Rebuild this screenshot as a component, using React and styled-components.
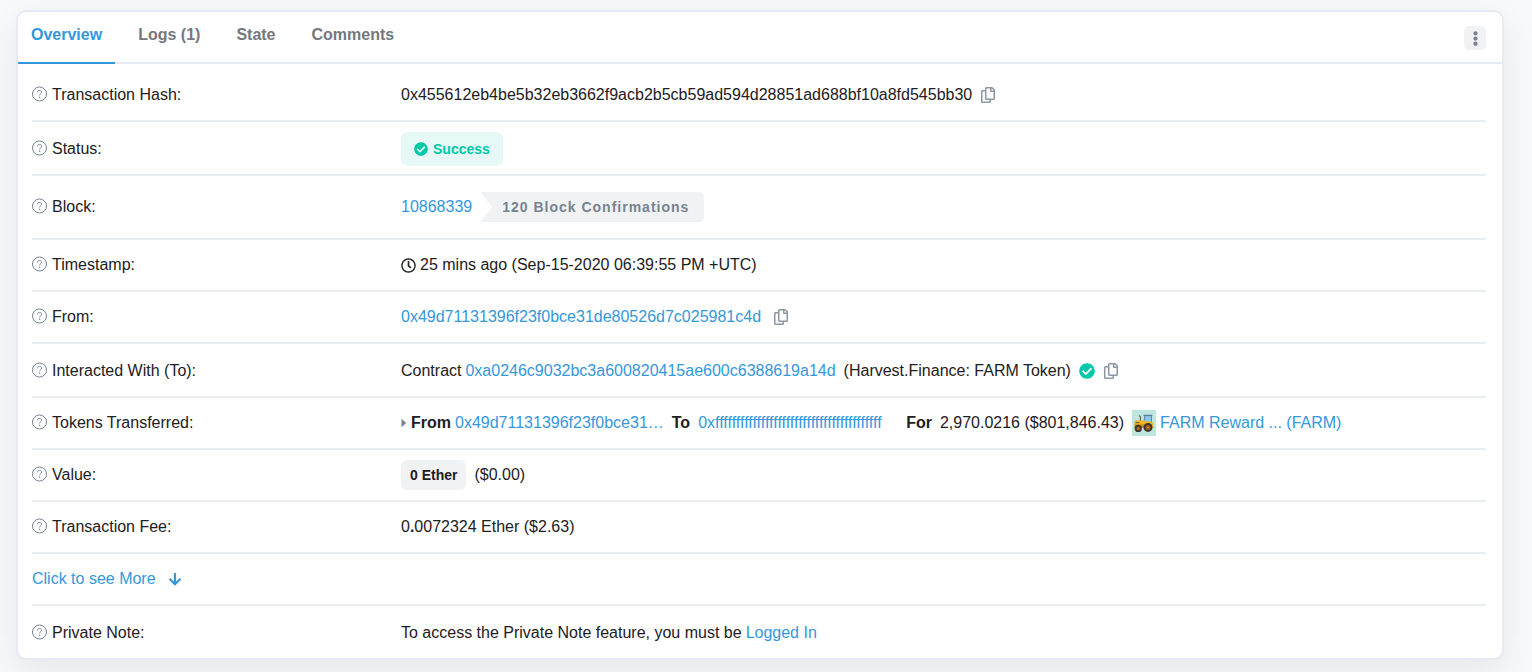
import React from "react";
import styled, { createGlobalStyle } from "styled-components";
import {
  FaCheckCircle,
  FaEllipsisV,
  FaRegClock,
  FaRegCopy,
} from "react-icons/fa";

const GlobalStyle = createGlobalStyle`
  *, *::before, *::after { box-sizing: border-box; }
  body {
    margin: 0;
    background: #f8f9fa;
    color: #1e2022;
    font-family: "Liberation Sans", Arial, sans-serif;
    font-size: 16px;
    line-height: 24px;
  }
`;

const Page = styled.main`
  padding: 10px 28px 12px 16px;
`;

const Card = styled.section`
  background: #fff;
  border: 2px solid #e7eaf3;
  border-radius: 10px;
  box-shadow: 0 12px 32px rgba(160, 166, 180, 0.2);
`;

const CardHeader = styled.header`
  display: flex;
  justify-content: space-between;
  align-items: flex-start;
  height: 52px;
  padding-right: 16px;
  border-bottom: 2px solid #e7eaf3;
`;

const Tabs = styled.nav`
  display: flex;
  gap: 10px;
`;

const Tab = styled.button`
  height: 52px;
  padding: 0 13px 4px;
  border: 0;
  border-bottom: 2px solid ${(p) => (p.$active ? "#3498db" : "transparent")};
  background: none;
  color: ${(p) => (p.$active ? "#3498db" : "#74787d")};
  font: bold 16px/24px "Liberation Sans", Arial, sans-serif;
  cursor: pointer;
`;

const MenuButton = styled.button`
  display: flex;
  align-items: center;
  justify-content: center;
  width: 22px;
  height: 24px;
  margin-top: 14px;
  padding: 0;
  border: 0;
  border-radius: 5px;
  background: #f1f2f4;
  color: #77838f;
  cursor: pointer;
`;

const Details = styled.dl`
  margin: 0;
  padding: 4px 16px 0 14px;
`;

const Row = styled.div`
  display: grid;
  grid-template-columns: 369px minmax(0, 1fr);
  align-items: center;
  min-height: ${(p) => p.$height || 52}px;
  padding-top: ${(p) => (p.$height === 54 ? 2 : 0)}px;
  border-bottom: 2px solid #e9eef3;

  &:last-child {
    min-height: 52px;
    border-bottom: 0;
  }

  @media (max-width: 900px) {
    grid-template-columns: 1fr;
    padding: 8px 0;
  }
`;

const Term = styled.dt`
  display: flex;
  align-items: center;
  gap: 4px;

  svg {
    margin-bottom: 2px;
  }
`;

const Value = styled.dd`
  display: flex;
  flex-wrap: wrap;
  align-items: center;
  gap: ${(p) => p.$gap || 8}px;
  min-width: 0;
  margin: 0;
  overflow-wrap: anywhere;
`;

const Group = styled.span`
  display: inline-flex;
  flex-wrap: wrap;
  align-items: center;
  gap: 4px;
`;

const Link = styled.a`
  color: #3498db;
  text-decoration: none;
`;

const RecipientLink = styled(Link)`
  min-width: 200px;
`;

const MoreLink = styled(Link)`
  display: inline-flex;
  align-items: center;
  gap: 12px;
`;

const CopyButton = styled.button`
  display: inline-flex;
  padding: 0;
  border: 0;
  background: none;
  color: #8c98a4;
  cursor: pointer;
`;

const Badge = styled.span`
  display: inline-flex;
  align-items: center;
  gap: 5px;
  height: ${(p) => (p.$success ? 34 : 30)}px;
  padding: 0 ${(p) => (p.$success ? 13 : 9)}px;
  border-radius: 6px;
  background: ${(p) => (p.$success ? "#e6f9f6" : "#f1f2f4")};
  color: ${(p) => (p.$success ? "#00c9a7" : "#1e2022")};
  font-size: 14px;
  font-weight: bold;
`;

const Confirmations = styled.span`
  height: 30px;
  padding: 0 15px 0 22px;
  border-radius: 0 5px 5px 0;
  background: #f1f2f4;
  clip-path: polygon(0 0, 100% 0, 100% 100%, 0 100%, 12px 50%);
  color: #77838f;
  font-size: 14px;
  font-weight: bold;
  line-height: 30px;
  letter-spacing: 1px;
`;

const Verified = styled(FaCheckCircle)`
  color: #00c9a7;
`;

function HelpIcon() {
  return (
    <svg width="16" height="16" viewBox="0 0 16 16" fill="none" stroke="#77838f" aria-hidden="true">
      <circle cx="7.5" cy="8" r="7" />
      <path d="M5.4 6.4C5.5 5.1 6.3 4.4 7.5 4.4c1.2 0 2.1.7 2.1 1.8 0 1.6-2 1.6-2 3.2" />
      <circle cx="7.6" cy="11.3" r=".7" fill="#77838f" stroke="none" />
    </svg>
  );
}

function Caret() {
  return (
    <svg width="6" height="10" viewBox="0 0 6 10" fill="#77838f" aria-hidden="true">
      <path d="M.5.8v8.4L5.2 5z" />
    </svg>
  );
}

function ArrowDown() {
  return (
    <svg width="14" height="14" viewBox="0 0 14 14" fill="none" stroke="currentColor" strokeWidth="2.2" aria-hidden="true">
      <path d="M7 1v11M1.5 6.8 7 12.2l5.5-5.4" />
    </svg>
  );
}

function TractorLogo() {
  return (
    <svg width="24" height="26" viewBox="0 0 24 26" aria-hidden="true">
      <path fill="#bfe5df" d="M0 0h24v26H0z" />
      <path fill="#8cc9e8" d="M12.5 6h7v6h-8z" />
      <path fill="none" stroke="#5b7f95" strokeWidth=".9" d="M11.9 12.5 12.8 6M19.5 6v6" />
      <path fill="#527d9b" d="M11.5 4.8h8.8v1.3h-8.8z" />
      <path fill="none" stroke="#68645a" strokeWidth="1.1" d="M8.4 11V6.8L7 5.4" />
      <path fill="#f3b51d" d="M2.6 12q0-1.6 1.6-1.6H12l1.3 1.1h6.4q1.8 1 1.8 4.5v2H2.6z" />
      <path fill="#d18a13" d="M2.6 14.4H12V18H2.6z" />
      <path fill="#5c5a50" d="M3.4 12.2h4v1h-4z" />
      <circle cx="6.3" cy="18.4" r="3.6" fill="#3d3630" />
      <circle cx="6.3" cy="18.4" r="1.7" fill="#b96b24" />
      <circle cx="16" cy="17.4" r="4.5" fill="#3d3630" />
      <circle cx="16" cy="17.4" r="2.5" fill="#9c5720" />
      <circle cx="16" cy="17.4" r="1" fill="#d98c30" />
    </svg>
  );
}

function Copy({ label }) {
  return (
    <CopyButton type="button" aria-label={label}>
      <FaRegCopy size={16} />
    </CopyButton>
  );
}

function Detail({ label, height, gap, children }) {
  return (
    <Row $height={height}>
      <Term>
        <HelpIcon />
        {label}:
      </Term>
      <Value $gap={gap}>{children}</Value>
    </Row>
  );
}

export default function App() {
  return (
    <>
      <GlobalStyle />
      <Page>
        <Card>
          <CardHeader>
            <Tabs aria-label="Transaction sections">
              <Tab type="button" $active aria-current="page">Overview</Tab>
              <Tab type="button">Logs (1)</Tab>
              <Tab type="button">State</Tab>
              <Tab type="button">Comments</Tab>
            </Tabs>
            <MenuButton type="button" aria-label="More options">
              <FaEllipsisV size={15} />
            </MenuButton>
          </CardHeader>
          <Details>
            <Detail label="Transaction Hash" height={54}>
              0x455612eb4be5b32eb3662f9acb2b5cb59ad594d28851ad688bf10a8fd545bb30
              <Copy label="Copy transaction hash" />
            </Detail>
            <Detail label="Status" height={54}>
              <Badge $success>
                <FaCheckCircle size={14} />
                Success
              </Badge>
            </Detail>
            <Detail label="Block" height={64}>
              <Link href="#block">10868339</Link>
              <Confirmations>120 Block Confirmations</Confirmations>
            </Detail>
            <Detail label="Timestamp" gap={4}>
              <FaRegClock size={15} />
              25 mins ago (Sep-15-2020 06:39:55 PM +UTC)
            </Detail>
            <Detail label="From" gap={12}>
              <Link href="#sender">0x49d71131396f23f0bce31de80526d7c025981c4d</Link>
              <Copy label="Copy sender address" />
            </Detail>
            <Detail label="Interacted With (To)" height={54}>
              <Group>
                Contract
                <Link href="#contract">0xa0246c9032bc3a600820415ae600c6388619a14d</Link>
              </Group>
              (Harvest.Finance: FARM Token)
              <Verified size={16} />
              <Copy label="Copy contract address" />
            </Detail>
            <Detail label="Tokens Transferred">
              <Group>
                <Caret />
                <b>From</b>
                <Link href="#sender">0x49d71131396f23f0bce31…</Link>
              </Group>
              <b>To</b>
              <RecipientLink href="#recipient">0xffffffffffffffffffffffffffffffffffffffff</RecipientLink>
              <b>For</b>
              2,970.0216 ($801,846.43)
              <Group>
                <TractorLogo />
                <Link href="#token">FARM Reward ... (FARM)</Link>
              </Group>
            </Detail>
            <Detail label="Value">
              <Badge>0 Ether</Badge>
              ($0.00)
            </Detail>
            <Detail label="Transaction Fee">
              <span>0<b>.</b>0072324 Ether ($2.63)</span>
            </Detail>
            <Row>
              <dt>
                <MoreLink href="#more">
                  Click to see More
                  <ArrowDown />
                </MoreLink>
              </dt>
            </Row>
            <Detail label="Private Note" height={54} gap={4}>
              To access the Private Note feature, you must be
              <Link href="#login">Logged In</Link>
            </Detail>
          </Details>
        </Card>
      </Page>
    </>
  );
}
